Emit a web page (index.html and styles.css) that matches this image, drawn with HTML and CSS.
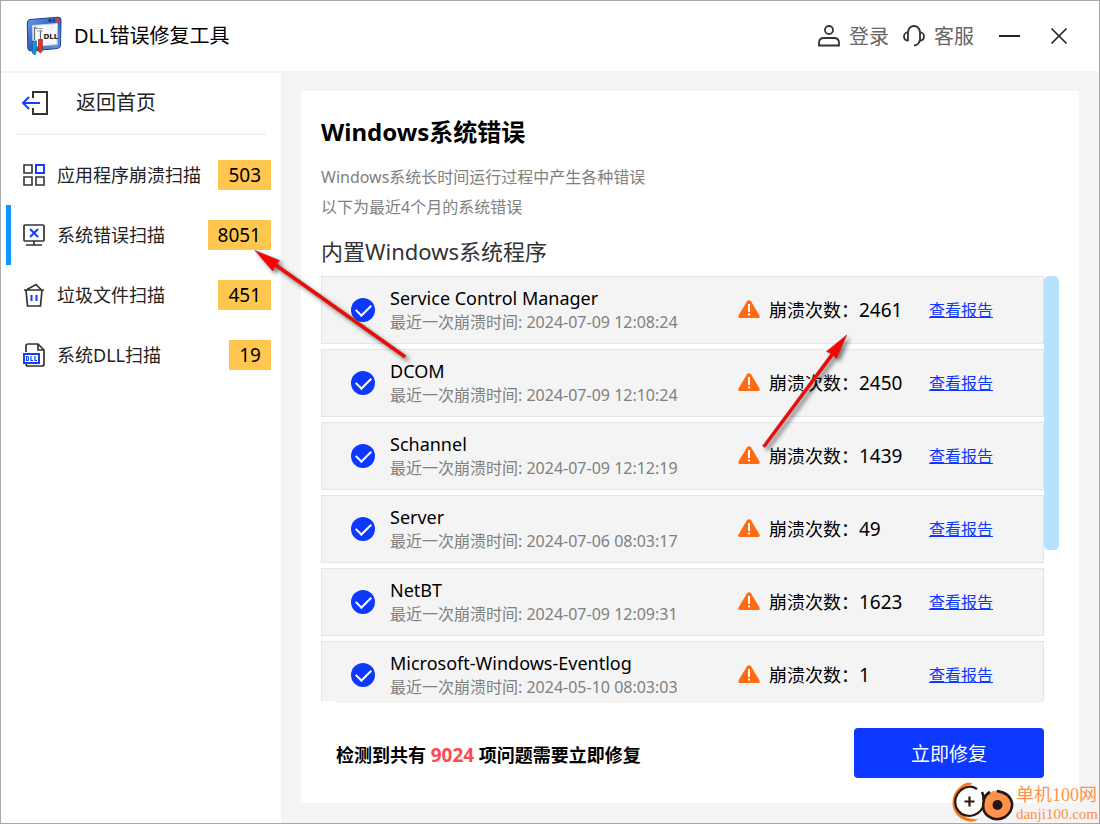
FILE: index.html
```html
<!DOCTYPE html>
<html lang="zh-CN">
<head>
<meta charset="utf-8">
<meta name="viewport" content="width=device-width, initial-scale=1">
<title>DLL错误修复工具</title>
<link rel="stylesheet" href="styles.css">
</head>
<body>
<svg class="symbols" aria-hidden="true">
  <defs>
    <symbol id="warn" viewBox="0 0 22 18">
      <path d="M9 1.2Q11-.9 13 1.2L21.500 15.600Q22.300 18 20 18H2Q-.3 18 .5 15.600Z" fill="#ff6a13"/>
      <path d="M10 4h2v8h-2zM10 13.500h2v2h-2z" fill="#fff"/>
    </symbol>
  </defs>
</svg>
<div class="window">
  <header class="titlebar">
    <svg class="logo" viewBox="0 0 36 40" aria-hidden="true">
      <defs>
        <linearGradient id="frame" x1="0" y1="0" x2="1" y2="1"><stop offset="0" stop-color="#6d9be6"/><stop offset=".5" stop-color="#2f62bd"/><stop offset="1" stop-color="#6f9fe5"/></linearGradient>
      </defs>
      <path d="M4 3.500 32 1.200Q35 1 35 4L34.500 29Q34.300 32 31.500 32.500L5 35Q2 35 1.800 32L1.300 7Q1.300 4 4 3.500Z" fill="url(#frame)" stroke="#1d428d"/>
      <path d="M6.500 9.500 31.500 7.500 31 28.500 7 30.500Z" fill="#f8f8fb" stroke="#bcd0f3"/>
      <path d="M22.500 4.500h3m1.500 0h2" stroke="#17357b" stroke-width="2.500"/>
      <circle cx="31.500" cy="4.500" r="2.300" fill="#e6392b"/>
      <path d="M8.500 24V11M14.500 24V14M9 11l2 2" fill="none" stroke="#666b76" stroke-width="1.200"/>
      <path d="M10 12.500h7m-6 2.500h6" stroke="#999" stroke-width="1.200"/>
      <path d="M6.500 25h4l-.5 12-1.500 2-2-2Z" fill="#1595dd" stroke="#0a5ba3" stroke-width=".7"/>
      <path d="M12.500 23.500h4l-.5 12-1.500 1.500-2-1.500Z" fill="#e3361f" stroke="#a51d10" stroke-width=".7"/>
      <text x="17.500" y="22.500" class="logo-text">DLL</text>
    </svg>
    <h1 class="app-name">DLL错误修复工具</h1>
    <div class="actions">
      <button class="action" type="button">
        <svg width="22" height="22" viewBox="0 0 22 22" fill="none" stroke="#333" stroke-width="1.800" aria-hidden="true"><circle cx="11" cy="5" r="4"/><path d="M1 20.500V18q0-5 5-5h10q5 0 5 5v2.500Z"/></svg>
        <span>登录</span>
      </button>
      <button class="action" type="button">
        <svg width="22" height="22" viewBox="0 0 22 22" fill="none" stroke="#333" stroke-width="1.800" aria-hidden="true"><path d="M5 16V7q1-6 6-6t6 6v7q-.5 6-6 6.500M5 7Q1 8 1 11.500T5 16M17 7q4 1 4 4.500T17 16"/></svg>
        <span>客服</span>
      </button>
      <button class="winbtn" type="button" aria-label="最小化"><svg width="22" height="22" viewBox="0 0 22 22" aria-hidden="true"><path d="M1 11h21" stroke="#222" stroke-width="2"/></svg></button>
      <button class="winbtn" type="button" aria-label="关闭"><svg width="22" height="22" viewBox="0 0 22 22" aria-hidden="true"><path d="m3.500 3.500 15 15m0-15-15 15" stroke="#222" stroke-width="1.600"/></svg></button>
    </div>
  </header>
  <div class="body">
    <aside class="sidebar">
      <a class="back" href="#">
        <svg width="28" height="26" viewBox="0 0 28 26" fill="none" stroke-width="2" aria-hidden="true"><path d="M12 8V2h14v22H12v-6" stroke="#333"/><path d="M19 13H2m6-6-6 6 6 6" stroke="#1241f5"/></svg>
        <span>返回首页</span>
      </a>
      <nav class="nav">
        <a class="nav-item" href="#">
          <svg width="22" height="22" viewBox="0 0 22 22" fill="none" stroke="#333" stroke-width="1.600" aria-hidden="true"><path d="M1 1h8v8H1zM1 13h8v8H1zM13 13h8v8h-8z"/><path d="M13 1h8v8h-8z" stroke="#1241f5" stroke-width="2"/></svg>
          <span class="nav-label">应用程序崩溃扫描</span><span class="badge">503</span>
        </a>
        <a class="nav-item active" href="#" aria-current="page">
          <svg width="22" height="22" viewBox="0 0 22 22" fill="none" stroke="#333" stroke-width="1.700" aria-hidden="true"><rect x="1" y="1" width="20" height="16" rx="1"/><path d="M11 17v4M3 21h16"/><path d="m7 5 8 8m0-8-8 8" stroke="#1241f5" stroke-width="2"/></svg>
          <span class="nav-label">系统错误扫描</span><span class="badge">8051</span>
        </a>
        <a class="nav-item" href="#">
          <svg width="22" height="24" viewBox="0 0 22 24" fill="none" stroke="#333" stroke-width="1.700" aria-hidden="true"><path d="M1 7h20M3 7l1.500 16h13L19 7M4 6.500l9-5 5 5"/><path d="M8.500 12v6M13.500 12v6" stroke="#1241f5" stroke-width="2"/></svg>
          <span class="nav-label">垃圾文件扫描</span><span class="badge">451</span>
        </a>
        <a class="nav-item" href="#">
          <svg width="22" height="24" viewBox="0 0 22 24" fill="none" stroke="#333" stroke-width="1.700" aria-hidden="true"><path d="M3 9V3q0-2 2-2h10l6 6v14q0 2-2 2H5q-2 0-2-2M15 1v6h6"/><path d="M1 11h15v9H1z" fill="#fff" stroke="#1241f5" stroke-width="2"/><path d="M3.500 13.500v4h1q1 0 1-1v-2q0-1-1-1ZM8 13v4.500h2M12 13v4.500h2" stroke="#1241f5" stroke-width="1.200"/></svg>
          <span class="nav-label">系统DLL扫描</span><span class="badge">19</span>
        </a>
      </nav>
    </aside>
    <main class="panel">
      <h2 class="title">Windows系统错误</h2>
      <p class="desc">Windows系统长时间运行过程中产生各种错误</p>
      <p class="desc">以下为最近4个月的系统错误</p>
      <h3 class="subtitle">内置Windows系统程序</h3>
      <div class="scroll">
        <ul class="list">
          <li class="row"><input class="check" type="checkbox" id="r1" checked><label class="info" for="r1"><span class="name">Service Control Manager</span><span class="time">最近一次崩溃时间: 2024-07-09 12:08:24</span></label><svg class="warn" aria-hidden="true"><use href="#warn"/></svg><span class="count">崩溃次数：<span class="num">2461</span></span><a class="report" href="#">查看报告</a></li>
          <li class="row"><input class="check" type="checkbox" id="r2" checked><label class="info" for="r2"><span class="name">DCOM</span><span class="time">最近一次崩溃时间: 2024-07-09 12:10:24</span></label><svg class="warn" aria-hidden="true"><use href="#warn"/></svg><span class="count">崩溃次数：<span class="num">2450</span></span><a class="report" href="#">查看报告</a></li>
          <li class="row"><input class="check" type="checkbox" id="r3" checked><label class="info" for="r3"><span class="name">Schannel</span><span class="time">最近一次崩溃时间: 2024-07-09 12:12:19</span></label><svg class="warn" aria-hidden="true"><use href="#warn"/></svg><span class="count">崩溃次数：<span class="num">1439</span></span><a class="report" href="#">查看报告</a></li>
          <li class="row"><input class="check" type="checkbox" id="r4" checked><label class="info" for="r4"><span class="name">Server</span><span class="time">最近一次崩溃时间: 2024-07-06 08:03:17</span></label><svg class="warn" aria-hidden="true"><use href="#warn"/></svg><span class="count">崩溃次数：<span class="num">49</span></span><a class="report" href="#">查看报告</a></li>
          <li class="row"><input class="check" type="checkbox" id="r5" checked><label class="info" for="r5"><span class="name">NetBT</span><span class="time">最近一次崩溃时间: 2024-07-09 12:09:31</span></label><svg class="warn" aria-hidden="true"><use href="#warn"/></svg><span class="count">崩溃次数：<span class="num">1623</span></span><a class="report" href="#">查看报告</a></li>
          <li class="row"><input class="check" type="checkbox" id="r6" checked><label class="info" for="r6"><span class="name">Microsoft-Windows-Eventlog</span><span class="time">最近一次崩溃时间: 2024-05-10 08:03:03</span></label><svg class="warn" aria-hidden="true"><use href="#warn"/></svg><span class="count">崩溃次数：<span class="num">1</span></span><a class="report" href="#">查看报告</a></li>
        </ul>
        <div class="thumb"></div>
      </div>
      <footer class="summary">
        <p class="total">检测到共有 <span class="total-num">9024</span> 项问题需要立即修复</p>
        <button class="fix" type="button">立即修复</button>
      </footer>
    </main>
  </div>
  <svg class="arrows" width="1100" height="824" viewBox="0 0 1100 824" aria-hidden="true">
    <g fill="#f00" stroke="#a33" stroke-width=".7">
      <path d="M255 250.500 279.500 260.500 277 264 406 355.500 404 358 275 266.500 272.700 271Z"/>
      <path d="M846.700 335 836.500 358.500 833.500 355.500 765 447.500 762.500 446 831 353.500 826.500 351.500Z"/>
    </g>
  </svg>
  <div class="watermark">
    <svg width="64" height="42" viewBox="0 0 64 42" fill="none" aria-hidden="true">
      <path d="M22 3Q17-1 10 5 1 12 1.500 23 3 36 16 40q7 2 11-2-11 1-17-5Q2 25 6 14 10 5 22 3Z" fill="#ff7417"/>
      <circle cx="18.500" cy="20.500" r="14" fill="#fff" fill-opacity=".7"/>
      <path d="M26 8Q18 3 10 9 2 16 5 26q4 9 14 9 9-1 13-9 2-5 0-10M18.500 15.500v10m-5-5h10" stroke="#231815" stroke-width="2.200"/>
      <circle cx="46.500" cy="24" r="14.500" fill="#ff9148"/>
      <path d="M31 11q2 4 2 8-3 11 4 16 8 6 17 1 8-6 7-14-2-10-15-12M33 18q2-5 6-7" stroke="#231815" stroke-width="2.600"/>
      <circle cx="46.500" cy="24" r="5" fill="#231815"/>
    </svg>
    <div class="wm-text"><span class="wm-name">单机100网</span><span class="wm-url">danji100.com</span></div>
  </div>
</div>
</body>
</html>
```
FILE: styles.css
```css
* { box-sizing: border-box; }
body {
  margin: 0;
  font-family: "Noto Sans", "Noto Sans CJK SC", sans-serif;
  color: #000;
}
h1, h2, h3, p, ul { margin: 0; padding: 0; font-weight: 400; }
ul { list-style: none; }
a { color: inherit; text-decoration: none; }
button { padding: 0; border: 0; background: none; font: inherit; cursor: pointer; }
svg { flex: none; display: block; }
.symbols { position: absolute; width: 0; height: 0; }

.window {
  position: relative;
  display: flex;
  flex-direction: column;
  height: 100vh;
  border: 1px solid #a9a9a9;
  background: #fff;
  overflow: hidden;
}
.titlebar {
  display: flex;
  align-items: center;
  height: 70px;
  flex: none;
  padding: 0 29px 0 25px;
}
.logo { width: 36px; height: 40px; margin-right: 12px; }
.logo-text { font: bold 7px "DejaVu Sans", sans-serif; fill: #222; }
.app-name { font-size: 20px; line-height: 30px; }
.actions { display: flex; align-items: center; margin-left: auto; }
.action {
  display: flex;
  align-items: center;
  gap: 9px;
  margin-right: 14px;
  color: #666;
  font-size: 20px;
  line-height: 30px;
}
.action span { padding-top: 2px; }
.winbtn { width: 22px; height: 22px; margin-left: 28px; }
.action + .winbtn { margin-left: 10px; }

.body { display: flex; flex: 1; min-height: 0; background: #f4f4f4; }
.sidebar {
  width: 280px;
  flex: none;
  background: #fff;
  border-top: 2px solid #f3f3f3;
}
.back {
  display: flex;
  align-items: center;
  gap: 27px;
  height: 62px;
  margin: 0 15px;
  padding-left: 5px;
  border-bottom: 2px solid #f3f3f3;
  color: #222;
  font-size: 20px;
  line-height: 30px;
}
.nav { padding-top: 10px; }
.nav-item {
  display: flex;
  align-items: center;
  height: 60px;
  margin-left: 5px;
  padding: 0 10px 0 12px;
  border-left: 5px solid transparent;
  color: #222;
  font-size: 18px;
  line-height: 30px;
}
.nav-item.active { border-left-color: #1296ff; }
.nav-label { flex: 1; margin-left: 12px; white-space: nowrap; }
.badge { padding: 0 10px; background: #ffc750; color: #000; font-size: 19px; }

.panel {
  display: flex;
  flex: 1;
  flex-direction: column;
  min-width: 0;
  margin: 20px;
  padding: 24px 20px 0;
  background: #fff;
}
.title { font-size: 24px; line-height: 34px; font-weight: 700; margin-bottom: 13px; }
.desc { font-size: 16px; line-height: 30px; color: #808080; }
.subtitle { font-size: 22px; line-height: 34px; color: #333; margin: 12px 0 8px; }
.scroll { display: flex; flex: 1; min-height: 0; }
.list { flex: 1; min-width: 0; overflow: hidden; }
.row {
  display: flex;
  align-items: center;
  height: 68px;
  margin-bottom: 5px;
  padding: 0 50px 0 29px;
  border: 1px solid #e5e5e5;
  background: #f4f4f4;
}
.check {
  display: grid;
  place-items: center;
  flex: none;
  width: 24px;
  height: 24px;
  margin: 0 15px 0 0;
  border-radius: 50%;
  background: #0d38ff;
  appearance: none;
}
.check::after {
  content: "";
  width: 13px;
  height: 7px;
  margin-bottom: 3px;
  border: solid #fff;
  border-width: 0 0 2px 2px;
  transform: rotate(-45deg);
}
.info { display: flex; flex: 1; flex-direction: column; min-width: 0; white-space: nowrap; }
.name { font-size: 18px; line-height: 24px; }
.time { font-size: 16px; line-height: 24px; color: #808080; }
.warn { width: 22px; height: 18px; margin: 0 9px 2px 0; }
.count { width: 160px; flex: none; font-size: 18px; line-height: 30px; white-space: nowrap; }
.num { font-size: 19px; }
.report { color: #0d38ff; font-size: 16px; line-height: 24px; text-decoration: underline; white-space: nowrap; }
.thumb { width: 15px; height: 274px; flex: none; border-radius: 5px; background: #b8e0ff; }
.summary {
  display: flex;
  align-items: center;
  justify-content: space-between;
  height: 102px;
  flex: none;
  margin: 0 15px;
  border-top: 2px solid #f3f3f3;
}
.total { padding-top: 4px; font-size: 18px; line-height: 30px; font-weight: 700; }
.total-num { color: #fb4b50; font-size: 19px; }
.fix {
  width: 190px;
  height: 50px;
  border-radius: 4px;
  background: #0d38ff;
  color: #fff;
  font-size: 19px;
}

.arrows {
  position: absolute;
  top: -1px;
  left: -1px;
  pointer-events: none;
  filter: drop-shadow(3px 3px 2px rgba(0, 0, 0, .5));
}
.watermark {
  position: absolute;
  right: 1px;
  bottom: 0;
  display: flex;
  align-items: center;
  gap: 1px;
  color: #ff9148;
}
.wm-text { display: flex; flex-direction: column; padding-top: 3px; white-space: nowrap; }
.wm-name { font-size: 18px; line-height: 20px; font-family: "Liberation Serif", "Noto Sans CJK SC", serif; }
.wm-url { font-size: 15px; line-height: 18px; font-family: "Liberation Serif", serif; }
```
